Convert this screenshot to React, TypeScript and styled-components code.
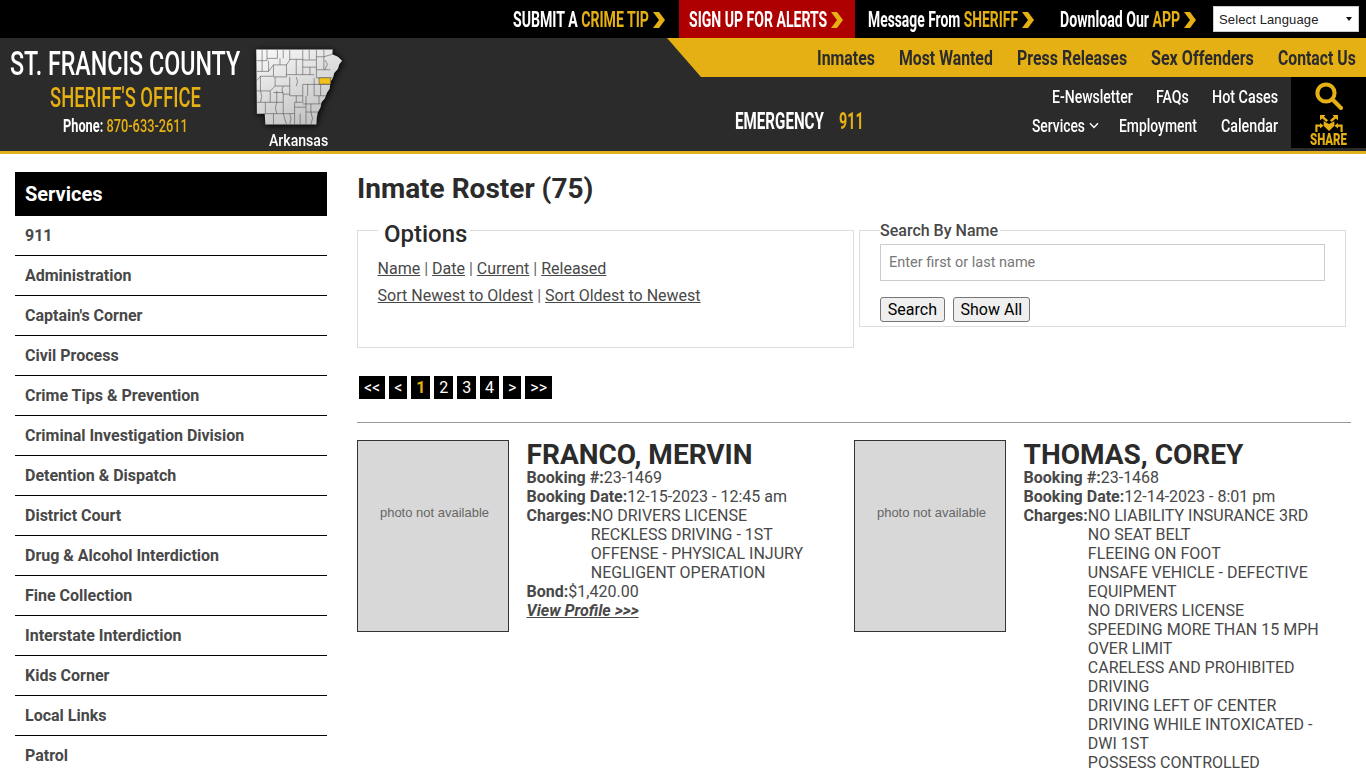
import React, { useLayoutEffect, useRef } from "react";
import styled, { createGlobalStyle } from "styled-components";

const GOLD = "#e5b013";
const DARK = "#2b2b2b";
const BODY = "#484848";

const Global = createGlobalStyle`
  html, body { margin: 0; padding: 0; background: #fff; }
  body { font-family: Roboto, "Liberation Sans", sans-serif; color: ${BODY}; font-size: 16px; }
  * { box-sizing: border-box; }
`;

const Viewport = styled.div`
  width: 1366px;
  height: 768px;
  overflow: hidden;
`;

const FitBox = styled.span<{ $w: number }>`
  display: inline-block;
  width: ${(p) => p.$w}px;
  white-space: nowrap;
`;
const FitInner = styled.span`
  display: inline-block;
  transform-origin: 0 50%;
`;

function Fit({ w, children }: { w: number; children: React.ReactNode }) {
  const ref = useRef<HTMLSpanElement>(null);
  useLayoutEffect(() => {
    const el = ref.current;
    if (el) el.style.transform = `scaleX(${w / el.offsetWidth})`;
  }, [w]);
  return (
    <FitBox $w={w}>
      <FitInner ref={ref}>{children}</FitInner>
    </FitBox>
  );
}

const Accent = styled.span`
  color: ${GOLD};
`;

const TopBar = styled.div`
  height: 38px;
  background: #000;
  display: flex;
  justify-content: flex-end;
  align-items: center;
  padding-right: 7px;
`;
const TopLink = styled.a<{ $red?: boolean; $gap: number }>`
  height: 38px;
  display: flex;
  align-items: center;
  margin-left: ${(p) => p.$gap}px;
  padding: ${(p) => (p.$red ? "2px 12px 0 10px" : "2px 0 0")};
  background: ${(p) => (p.$red ? "#ae0000" : "transparent")};
  color: #fff;
  font-size: 22px;
  font-weight: 700;
  line-height: 36px;
`;
const LangWrap = styled.div`
  position: relative;
  margin-left: 17px;
  width: 146px;
  height: 26px;
  &::after {
    content: "";
    position: absolute;
    right: 7px;
    top: 11px;
    border-left: 3px solid transparent;
    border-right: 3px solid transparent;
    border-top: 4px solid #111;
  }
`;
const LangSelect = styled.select`
  appearance: none;
  display: block;
  width: 146px;
  height: 26px;
  background: #fff;
  border: 1px solid #ccc;
  border-radius: 0;
  color: #222;
  font-family: "Liberation Sans", Arial, sans-serif;
  font-size: 13px;
  letter-spacing: 0.01em;
  padding: 0 5px;
`;
const Chevron = styled.svg`
  width: 12px;
  height: 16px;
  margin-left: 4px;
  flex: none;
`;
const Arrow = () => (
  <Chevron viewBox="0 0 12 16">
    <path d="M0 0H6L12 8L6 16H0L6 8Z" fill={GOLD} />
  </Chevron>
);

const Header = styled.header`
  height: 116px;
  background: ${DARK};
  border-bottom: 3px solid #e0b01c;
  display: flex;
`;
const Brand = styled.div`
  width: 250px;
  padding-top: 7px;
  display: flex;
  flex-direction: column;
  align-items: center;
`;
const BrandName = styled.div`
  height: 36px;
  font-size: 34px;
  font-weight: 500;
  line-height: 36px;
  color: #fff;
`;
const BrandSub = styled.div`
  margin-top: 2px;
  height: 30px;
  font-size: 28px;
  font-weight: 500;
  line-height: 30px;
  color: ${GOLD};
`;
const BrandPhone = styled.div`
  margin-top: 1px;
  height: 24px;
  font-size: 18px;
  font-weight: 500;
  line-height: 24px;
  color: ${GOLD};
  b {
    color: #fff;
    font-weight: 700;
  }
`;
const MapCol = styled.div`
  margin-left: 3px;
  width: 93px;
  padding-top: 9px;
  display: flex;
  flex-direction: column;
  align-items: center;
`;
const MapArt = styled.svg`
  width: 93px;
  height: 82px;
  filter: drop-shadow(1px 1px 3px #000);
`;
const MapLabel = styled.div`
  margin: 4px 2px 0 0;
  height: 20px;
  line-height: 20px;
  font-size: 16px;
  font-weight: 500;
  color: #fff;
`;
const HeaderRight = styled.div`
  margin-left: auto;
  width: 699px;
  display: flex;
  flex-direction: column;
`;
const GoldNav = styled.nav`
  height: 39px;
  background: ${GOLD};
  clip-path: polygon(0 0, 100% 0, 100% 100%, 34px 100%);
  display: flex;
  justify-content: flex-end;
  align-items: center;
  gap: 24px;
  padding: 2px 10px 0 0;
  font-size: 20px;
  font-weight: 700;
  color: ${DARK};
  line-height: 37px;
`;
const LowerRow = styled.div`
  height: 71px;
  display: flex;
`;
const Emergency = styled.div`
  padding: 17px 0 0 68px;
  display: flex;
  align-items: center;
  gap: 15px;
  font-size: 23px;
  font-weight: 700;
  color: #fff;
`;
const SubNav = styled.div`
  margin-left: auto;
  padding: 5px 13px 0 0;
  display: flex;
  flex-direction: column;
  align-items: flex-end;
`;
const SubRow = styled.div`
  height: 29px;
  display: flex;
  align-items: center;
  color: #fff;
  font-size: 18px;
  font-weight: 500;
  line-height: 29px;
`;
const SubLink = styled.a<{ $gap?: number }>`
  margin-left: ${(p) => p.$gap ?? 0}px;
  display: flex;
  align-items: center;
`;
const Caret = styled.svg`
  width: 10px;
  height: 7px;
  margin-left: 4px;
`;
const SharePanel = styled.div`
  width: 75px;
  background: #000;
  display: flex;
  flex-direction: column;
  align-items: center;
  color: ${GOLD};
`;
const SearchIcon = styled.svg`
  width: 28px;
  height: 28px;
  margin-top: 5px;
`;
const ShareIcon = styled.svg`
  width: 32px;
  height: 18px;
  margin-top: 4px;
`;
const ShareText = styled.div`
  height: 15px;
  line-height: 15px;
  font-size: 17px;
  font-weight: 900;
`;

const Page = styled.div`
  display: flex;
  gap: 30px;
  padding: 18px 15px 0;
`;
const Side = styled.aside`
  width: 312px;
  flex: none;
`;
const SideHead = styled.div`
  height: 44px;
  background: #000;
  color: #fff;
  padding-left: 10px;
  font-size: 20px;
  font-weight: 700;
  line-height: 44px;
`;
const SideItem = styled.a`
  display: block;
  height: 40px;
  border-bottom: 1px solid #000;
  padding-left: 10px;
  font-size: 16px;
  font-weight: 700;
  line-height: 39px;
  color: ${BODY};
`;
const Main = styled.main`
  width: 994px;
  flex: none;
`;
const Title = styled.h1`
  margin: 0 0 6px;
  font-size: 28px;
  line-height: 34px;
  font-weight: 700;
  color: ${DARK};
`;
const FilterRow = styled.div`
  display: flex;
  gap: 5px;
  align-items: flex-start;
`;
const OptionsBox = styled.fieldset`
  width: 497px;
  margin: 0;
  border: 1px solid #ddd;
  padding: 7px 20px 38px 19.6px;
  min-inline-size: 0;
`;
const OptionsLegend = styled.legend`
  padding: 8px 3px 0 6.4px;
  font-size: 24px;
  line-height: 28px;
  font-weight: 500;
  color: ${DARK};
`;
const OptionLine = styled.div`
  line-height: 27px;
  color: #666;
  a {
    color: ${BODY};
    text-decoration: underline;
  }
`;
const SearchBox = styled.fieldset`
  width: 487px;
  margin: 4px 0 0;
  border: 1px solid #ddd;
  padding: 0 20px 4px;
  min-inline-size: 0;
`;
const SearchLegend = styled.legend`
  padding: 2px 2px 0 0;
  font-size: 16px;
  line-height: 26px;
  font-weight: 500;
  color: ${BODY};
`;
const SearchInput = styled.input`
  display: block;
  width: 445px;
  height: 37px;
  border: 1px solid #ccc;
  padding: 0 8px;
  font-family: Roboto, sans-serif;
  font-size: 14.5px;
  &::placeholder {
    color: #777;
  }
`;
const ButtonRow = styled.div`
  margin-top: 16px;
  display: flex;
  gap: 8px;
`;
const PlainButton = styled.button`
  height: 25px;
  padding: 0 6.8px;
  background: #efefef;
  border: 1px solid #767676;
  border-radius: 3px;
  font-family: Roboto, sans-serif;
  font-size: 16px;
  color: #000;
`;
const Pager = styled.div`
  margin: 28px 0 23px;
  padding-left: 2px;
  display: flex;
  gap: 4px;
`;
const PageChip = styled.a<{ $on?: boolean }>`
  height: 23px;
  padding: 0 4.96px;
  background: #000;
  color: ${(p) => (p.$on ? GOLD : "#fff")};
  font-size: 16px;
  font-weight: ${(p) => (p.$on ? 700 : 400)};
  line-height: 23px;
`;
const Rule = styled.hr`
  margin: 0 0 17px;
  border: 0;
  height: 1px;
  background: #999;
`;
const Cards = styled.div`
  display: grid;
  grid-template-columns: 497px 497px;
`;
const Card = styled.article`
  display: flex;
  gap: 17.6px;
  align-items: flex-start;
`;
const Photo = styled.div`
  width: 152px;
  height: 192px;
  flex: none;
  background: #d8d8d8;
  border: 1px solid #333;
  display: flex;
  align-items: center;
  justify-content: center;
  padding: 0 0 48px 3px;
  font-family: "Liberation Sans", Arial, sans-serif;
  font-size: 13px;
  color: #666;
`;
const Info = styled.div`
  line-height: 19px;
  color: ${BODY};
  b {
    font-weight: 700;
  }
`;
const Name = styled.h2`
  margin: 0;
  height: 28px;
  padding-top: 1px;
  font-size: 28px;
  line-height: 28px;
  font-weight: 700;
  color: ${DARK};
`;
const ChargeRow = styled.div`
  display: flex;
`;
const ChargeList = styled.div`
  width: 240px;
`;
const Profile = styled.a`
  font-weight: 700;
  font-style: italic;
  text-decoration: underline;
  color: ${BODY};
`;

const services = [
  "911",
  "Administration",
  "Captain's Corner",
  "Civil Process",
  "Crime Tips & Prevention",
  "Criminal Investigation Division",
  "Detention & Dispatch",
  "District Court",
  "Drug & Alcohol Interdiction",
  "Fine Collection",
  "Interstate Interdiction",
  "Kids Corner",
  "Local Links",
  "Patrol",
];

const countyLines = [
  "M80 28V62H47", "M112 28V55H80", "M150 28V60L140 75", "M190 28V58H150", "M232 28V60H190", "M255 28V50H232",
  "M282 42L255 50", "M232 60V90H275", "M255 50V90", "M47 95H85V62", "M85 95L100 75H140", "M100 75V110H60L47 125",
  "M140 75V112H100", "M190 58V105H140", "M190 82H232", "M232 90V115H285", "M225 115V135H278", "M190 105H225",
  "M47 155H90L105 140V112", "M60 110V155", "M105 140H150V112", "M150 140V170H190V135H225", "M90 155V190H49",
  "M90 190H130V165H150", "M130 190V225H73", "M100 225V258", "M130 225H165V190H190V170", "M165 225V258",
  "M200 170V220H240", "M190 195H258", "M200 220V258", "M225 135V170H265", "M240 170V195", "M130 225L140 258",
  "M60 155L64 172L60 190", "M75 190V225", "M110 190L106 208L110 225", "M110 155V190", "M130 140L126 152L130 165",
  "M170 112L174 126L170 140", "M170 170V190", "M205 135V170", "M245 135V170", "M212 82V105", "M170 58V105",
  "M130 28V55", "M210 28V58", "M65 28V62", "M65 62V95", "M120 55V75", "M150 225L154 240L150 258", "M182 225V258",
  "M215 220L220 240L215 258", "M215 195V220", "M258 115V135", "M258 60L266 72L258 90", "M100 160H130", "M165 205H200",
];

const StateMap = () => {
  const outline =
    "M47 28L282 28L281 42L298 50L311 62L303 72L298 88L287 100L283 115L275 128L273 148L265 160L258 178L248 190L245 205L236 222L233 240L232 258L75 258L73 225L49 225Z";
  return (
    <MapArt viewBox="40 20 280 246">
      <defs>
        <linearGradient id="arFill" x1="0" y1="0" x2="0.5" y2="1">
          <stop offset="0" stopColor="#fafafa" />
          <stop offset="1" stopColor="#c4c4c4" />
        </linearGradient>
        <clipPath id="arClip">
          <path d={outline} />
        </clipPath>
      </defs>
      <path d={outline} fill="url(#arFill)" />
      <g clipPath="url(#arClip)" fill="none" stroke="#444" strokeWidth="1.6">
        {countyLines.map((d) => (
          <path key={d} d={d} />
        ))}
      </g>
      <rect x="240" y="115" width="36" height="19" fill="#f2c21a" stroke="#3a3a3a" strokeWidth="1.5" />
    </MapArt>
  );
};

const PhotoBox = () => <Photo>photo not available</Photo>;

export default function App() {
  return (
    <Viewport>
      <Global />
      <TopBar>
        <TopLink $gap={0}>
          <Fit w={136}>
            SUBMIT A <Accent>CRIME TIP</Accent>
          </Fit>
          <Arrow />
        </TopLink>
        <TopLink $gap={14} $red>
          <Fit w={138}>SIGN UP FOR ALERTS</Fit>
          <Arrow />
        </TopLink>
        <TopLink $gap={13}>
          <Fit w={150}>
            Message From <Accent>SHERIFF</Accent>
          </Fit>
          <Arrow />
        </TopLink>
        <TopLink $gap={26}>
          <Fit w={120}>
            Download Our <Accent>APP</Accent>
          </Fit>
          <Arrow />
        </TopLink>
        <LangWrap>
          <LangSelect defaultValue="x">
            <option value="x">Select Language</option>
          </LangSelect>
        </LangWrap>
      </TopBar>
      <Header>
        <Brand>
          <BrandName>
            <Fit w={230}>ST. FRANCIS COUNTY</Fit>
          </BrandName>
          <BrandSub>
            <Fit w={151}>SHERIFF'S OFFICE</Fit>
          </BrandSub>
          <BrandPhone>
            <Fit w={125}>
              <b>Phone:</b> 870-633-2611
            </Fit>
          </BrandPhone>
        </Brand>
        <MapCol>
          <StateMap />
          <MapLabel>
            <Fit w={59}>Arkansas</Fit>
          </MapLabel>
        </MapCol>
        <HeaderRight>
          <GoldNav>
            <Fit w={58}>Inmates</Fit>
            <Fit w={94}>Most Wanted</Fit>
            <Fit w={110}>Press Releases</Fit>
            <Fit w={103}>Sex Offenders</Fit>
            <Fit w={78}>Contact Us</Fit>
          </GoldNav>
          <LowerRow>
            <Emergency>
              <Fit w={89}>EMERGENCY</Fit>
              <Accent>
                <Fit w={25}>911</Fit>
              </Accent>
            </Emergency>
            <SubNav>
              <SubRow>
                <SubLink>
                  <Fit w={81}>E-Newsletter</Fit>
                </SubLink>
                <SubLink $gap={23}>
                  <Fit w={33}>FAQs</Fit>
                </SubLink>
                <SubLink $gap={23}>
                  <Fit w={66}>Hot Cases</Fit>
                </SubLink>
              </SubRow>
              <SubRow>
                <SubLink>
                  <Fit w={53}>Services</Fit>
                  <Caret viewBox="0 0 10 7">
                    <path d="M1 1.2L5 5.4L9 1.2" fill="none" stroke="#fff" strokeWidth="1.4" />
                  </Caret>
                </SubLink>
                <SubLink $gap={20}>
                  <Fit w={78}>Employment</Fit>
                </SubLink>
                <SubLink $gap={24}>
                  <Fit w={57}>Calendar</Fit>
                </SubLink>
              </SubRow>
            </SubNav>
            <SharePanel>
              <SearchIcon viewBox="0 0 28 28">
                <circle cx="11" cy="11" r="8.6" fill="none" stroke={GOLD} strokeWidth="4" />
                <path d="M17.5 17.5L26 26" stroke={GOLD} strokeWidth="4" strokeLinecap="round" />
              </SearchIcon>
              <ShareIcon viewBox="0 0 34 20" fill={GOLD}>
                <path d="M11 8L17 11L23 8V13L17 19L11 13Z" />
                <path d="M7 1H13L11.5 3L16 7L14 9L9.5 5L7 7Z" />
                <path d="M27 1H21L22.5 3L18 7L20 9L24.5 5L27 7Z" />
                <path d="M3 20V13H8" fill="none" stroke={GOLD} strokeWidth="2.4" />
                <path d="M31 20V13H26" fill="none" stroke={GOLD} strokeWidth="2.4" />
                <path d="M7 10L11 13L7 16Z" />
                <path d="M27 10L23 13L27 16Z" />
              </ShareIcon>
              <ShareText>
                <Fit w={37}>SHARE</Fit>
              </ShareText>
            </SharePanel>
          </LowerRow>
        </HeaderRight>
      </Header>
      <Page>
        <Side>
          <SideHead>Services</SideHead>
          {services.map((s) => (
            <SideItem key={s}>{s}</SideItem>
          ))}
        </Side>
        <Main>
          <Title>Inmate Roster (75)</Title>
          <FilterRow>
            <OptionsBox>
              <OptionsLegend>Options</OptionsLegend>
              <OptionLine>
                <a>Name</a> | <a>Date</a> | <a>Current</a> | <a>Released</a>
              </OptionLine>
              <OptionLine>
                <a>Sort Newest to Oldest</a> | <a>Sort Oldest to Newest</a>
              </OptionLine>
            </OptionsBox>
            <SearchBox>
              <SearchLegend>Search By Name</SearchLegend>
              <SearchInput placeholder="Enter first or last name" />
              <ButtonRow>
                <PlainButton>Search</PlainButton>
                <PlainButton>Show All</PlainButton>
              </ButtonRow>
            </SearchBox>
          </FilterRow>
          <Pager>
            <PageChip>&lt;&lt;</PageChip>
            <PageChip>&lt;</PageChip>
            <PageChip $on>1</PageChip>
            <PageChip>2</PageChip>
            <PageChip>3</PageChip>
            <PageChip>4</PageChip>
            <PageChip>&gt;</PageChip>
            <PageChip>&gt;&gt;</PageChip>
          </Pager>
          <Rule />
          <Cards>
            <Card>
              <PhotoBox />
              <Info>
                <Name>FRANCO, MERVIN</Name>
                <div>
                  <b>Booking #:</b>23-1469
                </div>
                <div>
                  <b>Booking Date:</b>12-15-2023 - 12:45 am
                </div>
                <ChargeRow>
                  <b>Charges:</b>
                  <ChargeList>
                    <div>NO DRIVERS LICENSE</div>
                    <div>RECKLESS DRIVING - 1ST OFFENSE - PHYSICAL INJURY</div>
                    <div>NEGLIGENT OPERATION</div>
                  </ChargeList>
                </ChargeRow>
                <div>
                  <b>Bond:</b>$1,420.00
                </div>
                <Profile>View Profile &gt;&gt;&gt;</Profile>
              </Info>
            </Card>
            <Card>
              <PhotoBox />
              <Info>
                <Name>THOMAS, COREY</Name>
                <div>
                  <b>Booking #:</b>23-1468
                </div>
                <div>
                  <b>Booking Date:</b>12-14-2023 - 8:01 pm
                </div>
                <ChargeRow>
                  <b>Charges:</b>
                  <ChargeList>
                    <div>NO LIABILITY INSURANCE 3RD</div>
                    <div>NO SEAT BELT</div>
                    <div>FLEEING ON FOOT</div>
                    <div>UNSAFE VEHICLE - DEFECTIVE EQUIPMENT</div>
                    <div>NO DRIVERS LICENSE</div>
                    <div>SPEEDING MORE THAN 15 MPH OVER LIMIT</div>
                    <div>CARELESS AND PROHIBITED DRIVING</div>
                    <div>DRIVING LEFT OF CENTER</div>
                    <div>DRIVING WHILE INTOXICATED - DWI 1ST</div>
                    <div>POSSESS CONTROLLED</div>
                  </ChargeList>
                </ChargeRow>
              </Info>
            </Card>
          </Cards>
        </Main>
      </Page>
    </Viewport>
  );
}
